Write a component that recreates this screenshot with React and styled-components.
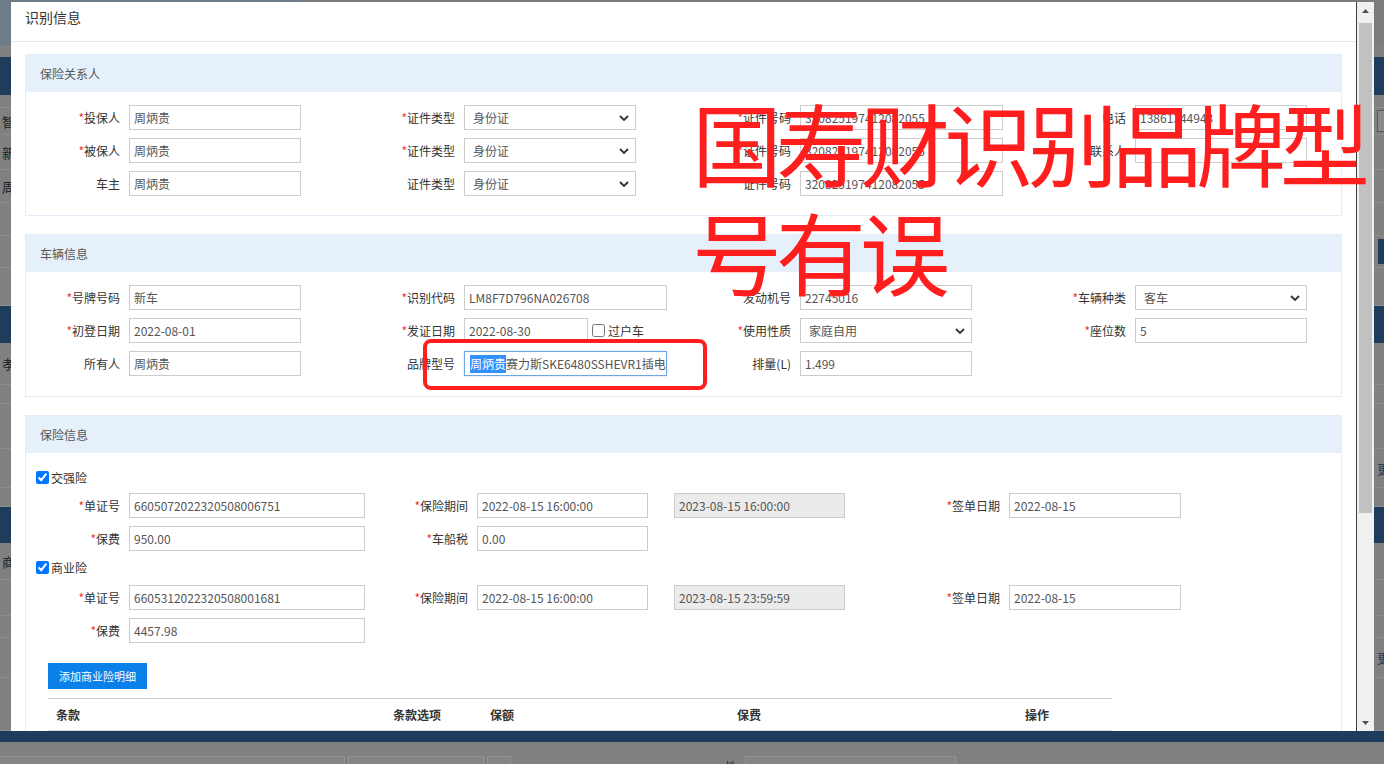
import React from 'react';
import styled, { createGlobalStyle } from 'styled-components';

const FONT = `"Noto Sans CJK SC", "Noto Sans", "Liberation Sans", sans-serif`;

const GlobalStyle = createGlobalStyle`
  * { box-sizing: border-box; }
  html, body { margin: 0; padding: 0; }
  body {
    width: 1384px; height: 764px; overflow: hidden;
    font-family: ${FONT}; font-size: 12px; color: #333; background: #808080;
  }
`;

const Screen = styled.div`
  position: relative;
  width: 1384px;
  height: 764px;
  overflow: hidden;
`;

/* ---------- dimmed page behind the dialog ---------- */
const BackPage = styled.div`
  display: flex;
  flex-direction: column;
  width: 100%;
  height: 100%;
  background: #808080;
`;
const BackTop = styled.div`
  flex: none;
  height: 45px;
  display: flex;
  background: #7b7b7b;
`;
const BackTopTint = styled.div`
  width: 300px;
  background: #6e7c8a;
`;
const BackGap = styled.div`
  flex: none;
  height: ${(p) => p.$h}px;
`;
const BackBand = styled.div`
  flex: none;
  height: ${(p) => p.$h}px;
  background: #1e3d5c;
`;
const BackRow = styled.div`
  flex: none;
  height: ${(p) => p.$h}px;
  display: flex;
  align-items: center;
  justify-content: space-between;
  padding-left: 2px;
  border-bottom: 1px solid #8e8e8e;
  overflow: hidden;
`;
const BackText = styled.span`
  font-size: 13px;
  color: #1c1c1c;
`;
const BackLink = styled.span`
  font-size: 13px;
  color: #1f3d5e;
  margin-right: -6px;
`;
const BackInput = styled.span`
  width: 24px;
  height: 22px;
  margin-right: -17px;
  border: 1px solid #5a5a5a;
  background: #8a8a8a;
`;
const BackButton = styled.span`
  width: 24px;
  height: 25px;
  margin-right: -18px;
  background: #1e3d5c;
`;
const BackForm = styled.div`
  flex: 1;
  display: flex;
  align-items: flex-start;
  padding-top: 14px;
`;
const BackBox = styled.span`
  flex: none;
  width: ${(p) => p.$w}px;
  height: 24px;
  margin-left: ${(p) => p.$ml}px;
  border: 1px solid #939393;
  background: #848484;
`;
const BackLabel = styled.span`
  margin-left: ${(p) => p.$ml}px;
  margin-top: 2px;
  font-size: 12px;
  color: #2a2a2a;
`;

/* ---------- dialog ---------- */
const Modal = styled.div`
  position: absolute;
  left: 11px;
  top: 2px;
  width: 1363px;
  height: 729px;
  display: flex;
  background: #fff;
  overflow: hidden;
`;
const ModalMain = styled.div`
  flex: 1;
  min-width: 0;
  display: flex;
  flex-direction: column;
`;
const TitleBar = styled.div`
  flex: none;
  height: 40px;
  padding: 6px 14px 0;
  border-bottom: 1px solid #e5e5e5;
  font-size: 14px;
  line-height: 18px;
  color: #333;
`;
const ModalBody = styled.div`
  flex: 1;
  overflow: hidden;
  padding: 12px 14px 0;
`;

const ScrollBar = styled.div`
  flex: none;
  width: 18px;
  display: flex;
  flex-direction: column;
  border-left: 1px solid #3c3c3c;
  background: #f0f0f0;
`;
const ScrollArrow = styled.div`
  flex: none;
  height: 17px;
  display: flex;
  align-items: center;
  justify-content: center;
`;
const ScrollTrack = styled.div`
  flex: 1;
  padding: 4px 2px 0;
`;
const ScrollThumb = styled.div`
  height: 490px;
  background: #c1c1c1;
`;

const Panel = styled.section`
  border: 1px solid #e3ecf7;
  background: #fff;
  margin-bottom: 18px;
`;
const PanelHeader = styled.div`
  height: 37px;
  display: flex;
  align-items: center;
  padding-left: 14px;
  background: #e6f0fb;
  font-size: 12px;
  color: #555;
`;
const PanelBody = styled.div`
  padding: ${(p) => p.$pad};
`;

const FieldGrid = styled.div`
  display: grid;
  grid-template-columns: ${(p) => p.$cols};
  row-gap: 8px;
  margin-top: ${(p) => p.$mt || 0}px;
`;
const Field = styled.div`
  display: flex;
  align-items: center;
  height: 25px;
`;
const Label = styled.label`
  flex: none;
  width: 94px;
  margin-right: 9px;
  text-align: right;
  white-space: nowrap;
  font-size: 12px;
  color: #333;
`;
const Req = styled.span`
  color: #f23030;
`;
const TextInput = styled.input`
  flex: none;
  width: ${(p) => p.$w || 172}px;
  height: 25px;
  margin: 0 0 0 ${(p) => p.$ml || 0}px;
  padding: 0 4px;
  border: 1px solid #ccc;
  border-radius: 0;
  outline: none;
  background: ${(p) => (p.$gray ? '#ebebeb' : '#fff')};
  font-family: ${FONT};
  font-size: 12px;
  color: #555;
`;
const FocusBox = styled.div`
  flex: none;
  width: ${(p) => p.$w || 172}px;
  height: 25px;
  padding: 0 5px;
  display: flex;
  align-items: center;
  overflow: hidden;
  white-space: nowrap;
  border: 1px solid #6fa6e4;
  box-shadow: 0 0 2px rgba(80, 150, 230, 0.35);
  font-size: 12px;
  color: #555;
`;
const Selected = styled.span`
  background: #3390ff;
  color: #fff;
  line-height: 18px;
`;
const SelectBox = styled.div`
  flex: none;
  width: ${(p) => p.$w || 172}px;
  height: 25px;
  display: flex;
  align-items: center;
  justify-content: space-between;
  padding: 0 6px 0 8px;
  border: 1px solid #ccc;
  font-size: 12px;
  color: #555;
`;
const CheckLabel = styled.label`
  display: flex;
  align-items: center;
  gap: 3px;
  margin-left: 4px;
  font-size: 12px;
  color: #333;
  input { margin: 0; width: 13px; height: 13px; }
`;
const CheckRow = styled.label`
  height: 24px;
  display: flex;
  align-items: center;
  gap: 2px;
  padding-left: 10px;
  margin-top: ${(p) => p.$mt || 0}px;
  font-size: 12px;
  color: #333;
  input { margin: 0; width: 13px; height: 13px; }
`;
const BlueButton = styled.button`
  display: block;
  height: 26px;
  margin: 20px 0 0 22px;
  padding: 0 11px;
  border: none;
  border-radius: 0;
  background: #0b80e8;
  color: #fff;
  font-family: ${FONT};
  font-size: 11px;
`;
const ClauseTable = styled.table`
  width: 1064px;
  margin: 9px 0 0 22px;
  border-collapse: collapse;
  border-top: 1px solid #ccc;
  th {
    height: 32px;
    padding: 0 0 0 8px;
    text-align: left;
    font-weight: bold;
    font-size: 12px;
    color: #333;
    border-bottom: 1px solid #ddd;
  }
`;

/* ---------- annotations drawn over the screenshot ---------- */
const Annotation = styled.div`
  position: absolute;
  left: 692px;
  top: 87px;
  width: 690px;
  z-index: 5;
  font-family: "Noto Sans CJK SC", sans-serif;
  font-size: 90px;
  line-height: 109px;
  letter-spacing: -6px;
  color: #ff1e1e;
  pointer-events: none;
`;
const RedFrame = styled.div`
  position: absolute;
  left: 423px;
  top: 339px;
  width: 284px;
  height: 51px;
  z-index: 5;
  border: 4px solid #ff1e1e;
  border-radius: 8px;
`;

const Chevron = () => (
  <svg width="10" height="6" viewBox="0 0 10 6">
    <path d="M1 1l4 4 4-4" fill="none" stroke="#333" strokeWidth="1.8" />
  </svg>
);
const Tri = ({ down }) => (
  <svg width="7" height="4" viewBox="0 0 7 4">
    <path d={down ? 'M0 0h7L3.5 4z' : 'M0 4h7L3.5 0z'} fill="#505050" />
  </svg>
);

const Text = ({ label, req, value, w }) => (
  <Field>
    <Label>{req && <Req>*</Req>}{label}</Label>
    <TextInput readOnly value={value} $w={w} />
  </Field>
);
const Select = ({ label, req, value, w }) => (
  <Field>
    <Label>{req && <Req>*</Req>}{label}</Label>
    <SelectBox $w={w}>
      <span>{value}</span>
      <Chevron />
    </SelectBox>
  </Field>
);
const Empty = () => <Field />;

const bgRows = [
  { k: 'gap', h: 12 },
  { k: 'band', h: 38 },
  { k: 'row', h: 13 },
  { k: 'row', h: 27, left: '智', right: 'input' },
  { k: 'row', h: 35, left: '新' },
  { k: 'row', h: 33, left: '周' },
  { k: 'row', h: 33 },
  { k: 'row', h: 32, right: 'btn' },
  { k: 'row', h: 38 },
  { k: 'band', h: 37 },
  { k: 'row', h: 42, left: '孝' },
  { k: 'row', h: 19 },
  { k: 'row', h: 45 },
  { k: 'row', h: 39, right: '更' },
  { k: 'row', h: 19 },
  { k: 'band', h: 36 },
  { k: 'row', h: 37, left: '商' },
  { k: 'row', h: 36 },
  { k: 'row', h: 22 },
  { k: 'row', h: 40, right: '更' },
  { k: 'row', h: 53 },
  { k: 'band', h: 11 },
];

function Background() {
  return (
    <BackPage>
      <BackTop><BackTopTint /></BackTop>
      {bgRows.map((r, i) => {
        if (r.k === 'gap') return <BackGap key={i} $h={r.h} />;
        if (r.k === 'band') return <BackBand key={i} $h={r.h} />;
        return (
          <BackRow key={i} $h={r.h}>
            <BackText>{r.left || ''}</BackText>
            {r.right === 'input' && <BackInput />}
            {r.right === 'btn' && <BackButton />}
            {r.right === '更' && <BackLink>更</BackLink>}
          </BackRow>
        );
      })}
      <BackForm>
        <BackBox $w={346} $ml={-1} />
        <BackBox $w={136} $ml={3} />
        <BackBox $w={24} $ml={3} />
        <BackLabel $ml={214}>性</BackLabel>
        <BackBox $w={211} $ml={8} />
      </BackForm>
    </BackPage>
  );
}

export default function App() {
  return (
    <Screen>
      <GlobalStyle />
      <Background />
      <Modal>
        <ModalMain>
          <TitleBar>识别信息</TitleBar>
          <ModalBody>
            <Panel>
              <PanelHeader>保险关系人</PanelHeader>
              <PanelBody $pad="13px 0 19px">
                <FieldGrid $cols="335px 336px 335px auto">
                  <Text req label="投保人" value="周炳贵" />
                  <Select req label="证件类型" value="身份证" />
                  <Text req label="证件号码" value="320825197412082055" w={203} />
                  <Text label="电话" value="13861344943" />
                  <Text req label="被保人" value="周炳贵" />
                  <Select req label="证件类型" value="身份证" />
                  <Text req label="证件号码" value="320825197412082055" w={203} />
                  <Text label="联系人" value="" />
                  <Text label="车主" value="周炳贵" />
                  <Select label="证件类型" value="身份证" />
                  <Text label="证件号码" value="320825197412082055" w={203} />
                  <Empty />
                </FieldGrid>
              </PanelBody>
            </Panel>

            <Panel>
              <PanelHeader>车辆信息</PanelHeader>
              <PanelBody $pad="13px 0 20px">
                <FieldGrid $cols="335px 336px 335px auto">
                  <Text req label="号牌号码" value="新车" />
                  <Text req label="识别代码" value="LM8F7D796NA026708" w={203} />
                  <Text label="发动机号" value="22745016" />
                  <Select req label="车辆种类" value="客车" />
                  <Text req label="初登日期" value="2022-08-01" />
                  <Field>
                    <Label><Req>*</Req>发证日期</Label>
                    <TextInput readOnly value="2022-08-30" $w={124} />
                    <CheckLabel>
                      <input type="checkbox" defaultChecked={false} />
                      过户车
                    </CheckLabel>
                  </Field>
                  <Select req label="使用性质" value="家庭自用" />
                  <Text req label="座位数" value="5" />
                  <Text label="所有人" value="周炳贵" />
                  <Field>
                    <Label>品牌型号</Label>
                    <FocusBox $w={203}>
                      <Selected>周炳贵</Selected>赛力斯SKE6480SSHEVR1插电
                    </FocusBox>
                  </Field>
                  <Text label="排量(L)" value="1.499" />
                  <Empty />
                </FieldGrid>
              </PanelBody>
            </Panel>

            <Panel>
              <PanelHeader>保险信息</PanelHeader>
              <PanelBody $pad="12px 0 40px">
                <CheckRow>
                  <input type="checkbox" defaultChecked />
                  交强险
                </CheckRow>
                <FieldGrid $cols="348px 532px auto" $mt={4}>
                  <Text req label="单证号" value="6605072022320508006751" w={236} />
                  <Field>
                    <Label><Req>*</Req>保险期间</Label>
                    <TextInput readOnly value="2022-08-15 16:00:00" $w={171} />
                    <TextInput readOnly value="2023-08-15 16:00:00" $w={171} $ml={26} $gray />
                  </Field>
                  <Text req label="签单日期" value="2022-08-15" />
                  <Text req label="保费" value="950.00" w={236} />
                  <Text req label="车船税" value="0.00" w={171} />
                  <Empty />
                </FieldGrid>
                <CheckRow $mt={4}>
                  <input type="checkbox" defaultChecked />
                  商业险
                </CheckRow>
                <FieldGrid $cols="348px 532px auto" $mt={6}>
                  <Text req label="单证号" value="6605312022320508001681" w={236} />
                  <Field>
                    <Label><Req>*</Req>保险期间</Label>
                    <TextInput readOnly value="2022-08-15 16:00:00" $w={171} />
                    <TextInput readOnly value="2023-08-15 23:59:59" $w={171} $ml={26} $gray />
                  </Field>
                  <Text req label="签单日期" value="2022-08-15" />
                  <Text req label="保费" value="4457.98" w={236} />
                  <Empty />
                  <Empty />
                </FieldGrid>
                <BlueButton type="button">添加商业险明细</BlueButton>
                <ClauseTable>
                  <colgroup>
                    <col style={{ width: 337 }} />
                    <col style={{ width: 97 }} />
                    <col style={{ width: 247 }} />
                    <col style={{ width: 288 }} />
                    <col style={{ width: 95 }} />
                  </colgroup>
                  <thead>
                    <tr>
                      <th>条款</th>
                      <th>条款选项</th>
                      <th>保额</th>
                      <th>保费</th>
                      <th>操作</th>
                    </tr>
                  </thead>
                </ClauseTable>
              </PanelBody>
            </Panel>
          </ModalBody>
        </ModalMain>
        <ScrollBar>
          <ScrollArrow><Tri /></ScrollArrow>
          <ScrollTrack><ScrollThumb /></ScrollTrack>
          <ScrollArrow><Tri down /></ScrollArrow>
        </ScrollBar>
      </Modal>
      <Annotation>国寿财识别品牌型号有误</Annotation>
      <RedFrame />
    </Screen>
  );
}
